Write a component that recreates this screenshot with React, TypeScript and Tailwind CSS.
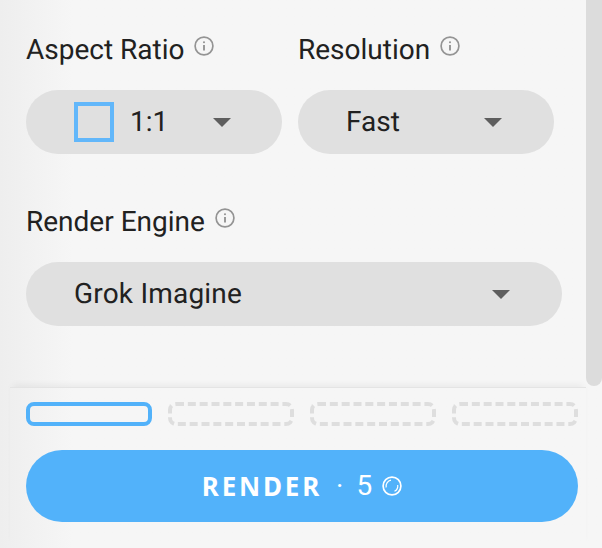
import React from 'react';

const InfoIcon = () => (
  <svg viewBox="0 0 20 20" className="w-[20px] h-[20px] text-[#949494]" fill="none" stroke="currentColor">
    <circle cx="10" cy="10" r="8.9" strokeWidth="1.7" />
    <circle cx="10" cy="6.2" r="1.05" fill="currentColor" stroke="none" />
    <line x1="10" y1="9" x2="10" y2="14.6" strokeWidth="1.9" />
  </svg>
);

const Caret = () => (
  <svg viewBox="0 0 18 9" className="w-[18px] h-[9px] text-[#5e5e5e]" fill="currentColor">
    <path d="M0 0 H18 L9 9 Z" />
  </svg>
);

const Label = ({ text }: { text: string }) => (
  <div className="flex items-start h-[30px] gap-[10px]">
    <span className="text-[28px] leading-[30px] text-[#212121]">{text}</span>
    <span className="mt-[1px]"><InfoIcon /></span>
  </div>
);

const Slot = ({ active }: { active?: boolean }) => (
  <div
    className={
      active
        ? 'h-[24px] rounded-[8px] border-[4px] border-[#52b2fa]'
        : 'h-[24px] rounded-[8px] border-[4px] border-dashed border-[#dedede]'
    }
  />
);

export default function App() {
  return (
    <div
      className="w-[602px] h-[548px] overflow-hidden flex flex-col bg-[#f6f6f6] bg-gradient-to-r from-[#eeeeee] to-[#f6f6f6] to-[12%] [text-rendering:geometricPrecision]"
      style={{ fontFamily: 'Roboto, sans-serif' }}
    >
      {/* Settings panel with scrollbar */}
      <div className="flex h-[387px] shrink-0">
        <div className="w-[586px] pt-[35px] pl-[26px]">
          <div className="flex gap-[16px]">
            <div className="w-[256px]">
              <Label text="Aspect Ratio" />
              <div className="mt-[25px] h-[64px] rounded-full bg-[#e0e0e0] flex items-center pl-[48px]">
                <span className="w-[40px] h-[40px] border-[4px] border-[#62b7fa]" />
                <span className="ml-[16px] w-[83px] text-[28px] text-[#212121]">1:1</span>
                <Caret />
              </div>
            </div>
            <div className="w-[256px]">
              <Label text="Resolution" />
              <div className="mt-[25px] h-[64px] rounded-full bg-[#e0e0e0] flex items-center pl-[48px]">
                <span className="w-[138px] text-[28px] text-[#212121]">Fast</span>
                <Caret />
              </div>
            </div>
          </div>
          <div className="mt-[53px] w-[536px]">
            <Label text="Render Engine" />
            <div className="mt-[25px] h-[64px] rounded-full bg-[#e0e0e0] flex items-center pl-[48px]">
              <span className="w-[418px] text-[28px] tracking-[0.2px] text-[#212121]">Grok Imagine</span>
              <Caret />
            </div>
          </div>
        </div>
        <div className="w-[16px] h-full bg-[#f6f6f6]">
          <div className="h-[386px] bg-[#dcdcdc] rounded-b-full" />
        </div>
      </div>

      {/* Footer */}
      <div className="ml-[10px] w-[576px] flex-1 pl-[16px] border-t border-[#e4e4e4] shadow-[0_-5px_7px_-3px_rgba(0,0,0,0.06)]">
        <div className="w-[552px] mt-[14px] grid grid-cols-4 gap-[16px]">
          <Slot active />
          <Slot />
          <Slot />
          <Slot />
        </div>
        <button className="mt-[24px] w-[552px] h-[72px] rounded-full bg-[#52b2fa] flex items-center justify-center text-white text-[28px]">
          <span className="text-[26px] font-bold tracking-[2.8px]" style={{ fontFamily: '"Noto Sans", sans-serif' }}>RENDER</span>
          <span className="ml-[14px]">·</span>
          <span className="ml-[13px]">5</span>
          <svg viewBox="0 0 20 20" className="ml-[10px] w-[20px] h-[20px]" fill="none" stroke="currentColor">
            <circle cx="10" cy="10" r="8.9" strokeWidth="1.7" />
            <path d="M4.2 11.5 A6 6 0 0 1 9 4.2" strokeWidth="1.2" />
            <path d="M15.7 9 A6 6 0 0 1 12.5 15.3" strokeWidth="1.2" />
          </svg>
        </button>
      </div>
    </div>
  );
}
